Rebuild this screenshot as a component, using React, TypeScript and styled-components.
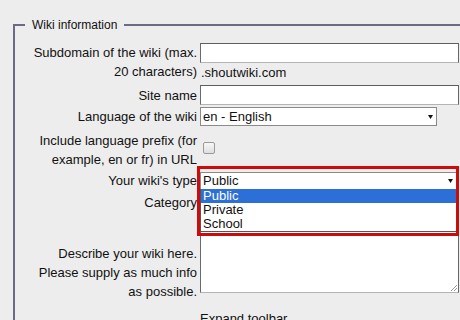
import React from "react";
import styled, { createGlobalStyle } from "styled-components";

const GlobalStyle = createGlobalStyle`
  html, body {
    margin: 0;
    padding: 0;
    width: 460px;
    height: 320px;
    overflow: hidden;
    background: #ededed;
  }
  body {
    font-family: "Liberation Sans", Arial, sans-serif;
    color: #111;
  }
`;

const Page = styled.div`
  width: 460px;
  height: 320px;
  overflow: hidden;
  padding-top: 18px;
  box-sizing: border-box;
`;

const Fieldset = styled.fieldset`
  margin: 0 0 0 13px;
  width: 480px;
  border: 2px solid #6b6b86;
  padding: 11px 0 40px 10px;
  min-inline-size: 0;
`;

const Legend = styled.legend`
  font-size: 12px;
  line-height: 14px;
  padding: 0 7px;
  color: #111;
`;

const Form = styled.div`
  display: grid;
  grid-template-columns: 172px 262px;
  column-gap: 3px;
  row-gap: 2px;
  font-size: 13px;
  line-height: 19px;
`;

type Align = "start" | "center" | "end";

const Label = styled.div<{ $valign?: Align; $pad?: number }>`
  text-align: right;
  align-self: ${(p) => p.$valign ?? "center"};
  padding-top: ${(p) => p.$pad ?? 0}px;
`;

const Control = styled.div<{ $valign?: Align; $pad?: number }>`
  position: relative;
  align-self: ${(p) => p.$valign ?? "center"};
  padding-top: ${(p) => p.$pad ?? 0}px;
  display: flex;
  flex-direction: column;
  align-items: flex-start;
`;

const TextInput = styled.div<{ $h?: number }>`
  width: 259px;
  height: ${(p) => p.$h ?? 20}px;
  box-sizing: border-box;
  background: #fff;
  border: 1px solid;
  border-color: #5e5e5e #666 #b4b4b4 #6a6a6a;
`;

const Suffix = styled.span`
  line-height: 20px;
  padding-left: 1px;
`;

const SelectBox = styled.div<{ $w: number; $h: number }>`
  width: ${(p) => p.$w}px;
  height: ${(p) => p.$h}px;
  box-sizing: border-box;
  background: #fff;
  border: 1px solid #8a8a8a;
  display: flex;
  align-items: center;
  justify-content: space-between;
  padding: 0 3px 0 2px;
  font-size: 13px;
`;

const Arrow = () => (
  <svg width="5" height="4" viewBox="0 0 5 4">
    <path d="M0 0h5L2.5 4z" fill="#111" />
  </svg>
);

const Checkbox = styled.div`
  width: 12px;
  height: 12px;
  margin-left: 3px;
  box-sizing: border-box;
  border: 1px solid #9a9a9a;
  border-radius: 2px;
  background: linear-gradient(#f7f7f7, #dedede);
`;

const Highlight = styled.div`
  position: absolute;
  top: -6px;
  left: -3px;
  width: 262px;
  height: 70px;
  box-sizing: border-box;
  border: 3px solid #cf0a0a;
  z-index: 3;
  pointer-events: none;
`;

const DropList = styled.div`
  position: absolute;
  top: 17px;
  left: 0;
  width: 257px;
  box-sizing: border-box;
  background: #fff;
  border: 1px solid #555;
  border-top: none;
  z-index: 2;
`;

const Option = styled.div<{ $active?: boolean }>`
  line-height: 14px;
  height: 14px;
  padding-left: 2px;
  font-size: 13px;
  background: ${(p) => (p.$active ? "#2c6fd6" : "transparent")};
  color: ${(p) => (p.$active ? "#fff" : "#111")};
`;

const TextArea = styled(TextInput)`
  position: relative;
`;

const Grip = () => (
  <svg
    width="7"
    height="7"
    viewBox="0 0 7 7"
    style={{ position: "absolute", right: 1, bottom: 1 }}
  >
    <path d="M1 7L7 1M4 7L7 4" stroke="#999" strokeWidth="1" />
  </svg>
);

const FooterLink = styled.div`
  grid-column: 2;
  padding-top: 6px;
  font-size: 13px;
  line-height: 19px;
`;

export default function App() {
  return (
    <Page>
      <GlobalStyle />
      <Fieldset>
        <Legend>Wiki information</Legend>
        <Form>
          <Label $valign="start">
            Subdomain of the wiki (max.
            <br />
            20 characters)
          </Label>
          <Control $valign="start">
            <TextInput />
            <Suffix>.shoutwiki.com</Suffix>
          </Control>

          <Label>Site name</Label>
          <Control>
            <TextInput />
          </Control>

          <Label>Language of the wiki</Label>
          <Control>
            <SelectBox $w={237} $h={19}>
              <span>en - English</span>
              <Arrow />
            </SelectBox>
          </Control>

          <Label $valign="start" $pad={3}>
            Include language prefix (for
            <br />
            example, en or fr) in URL
          </Label>
          <Control $valign="start" $pad={14}>
            <Checkbox />
          </Control>

          <Label>Your wiki's type</Label>
          <Control>
            <SelectBox $w={257} $h={18}>
              <span>Public</span>
              <Arrow />
            </SelectBox>
            <DropList>
              <Option $active>Public</Option>
              <Option>Private</Option>
              <Option>School</Option>
            </DropList>
            <Highlight />
          </Control>

          <Label>Category</Label>
          <Control>
            <SelectBox $w={257} $h={20}>
              <span />
              <Arrow />
            </SelectBox>
          </Control>

          <Label $valign="start" $pad={30}>
            Describe your wiki here.
            <br />
            Please supply as much info
            <br />
            as possible.
          </Label>
          <Control $valign="start">
            <TextArea $h={79}>
              <Grip />
            </TextArea>
          </Control>

          <FooterLink>Expand toolbar</FooterLink>
        </Form>
      </Fieldset>
    </Page>
  );
}
